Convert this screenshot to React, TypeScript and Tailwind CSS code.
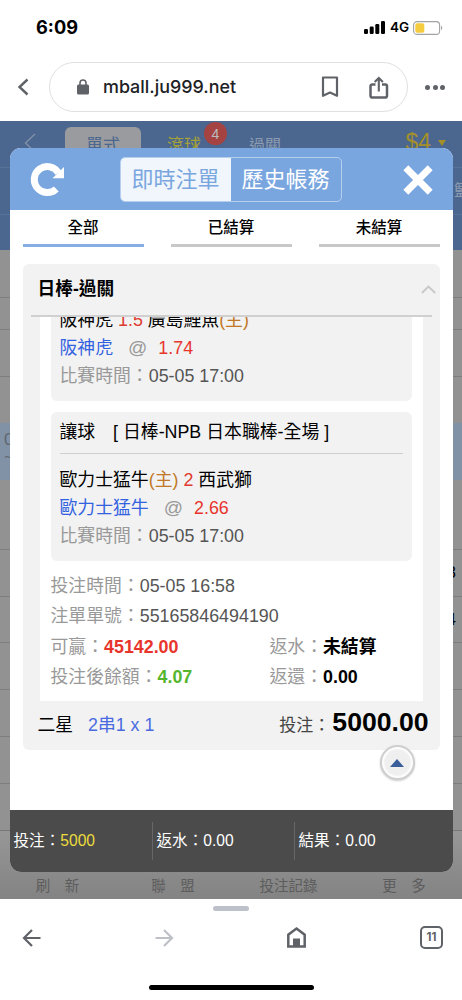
import clsx from "clsx";
import React from "react";

type MatchType = {
  title?: string;
  home: string;
  homeIsHost?: boolean;
  handicap: string;
  away: string;
  awayIsHost?: boolean;
  pick: string;
  odds: string;
  time: string;
};

const matches: MatchType[] = [
  {
    home: "阪神虎",
    handicap: "1.5",
    away: "廣島鯉魚",
    awayIsHost: true,
    pick: "阪神虎",
    odds: "1.74",
    time: "05-05 17:00",
  },
  {
    title: "讓球　[ 日棒-NPB 日本職棒-全場 ]",
    home: "歐力士猛牛",
    homeIsHost: true,
    handicap: "2",
    away: "西武獅",
    pick: "歐力士猛牛",
    odds: "2.66",
    time: "05-05 17:00",
  },
];

const filters = ["全部", "已結算", "未結算"];

const totals = [
  { label: "投注：", value: "5000", highlight: true },
  { label: "返水：", value: "0.00" },
  { label: "結果：", value: "0.00" },
];

function StatusBar() {
  return (
    <div className="flex h-[55px] items-center justify-between pl-9 pr-[19px] font-['Inter',sans-serif] text-black">
      <span className="text-[18.2px] font-bold leading-none">6:09</span>
      <div className="flex items-center">
        <svg width="21" height="13" viewBox="0 0 21 13" fill="#000">
          <rect x="0" y="8" width="4" height="5" rx="1.2" />
          <rect x="5.7" y="5.5" width="4" height="7.5" rx="1.2" />
          <rect x="11.3" y="3" width="4" height="10" rx="1.2" />
          <rect x="17" y="0" width="4" height="13" rx="1.2" />
        </svg>
        <span className="ml-[5px] w-[19px] text-[13.5px] font-semibold leading-none">
          4G
        </span>
        <svg className="ml-1" width="30" height="14" viewBox="0 0 30 14">
          <rect x="0.6" y="0.6" width="26" height="12.8" rx="3.5" fill="none" stroke="#a3a3a3" strokeWidth="1.1" />
          <rect x="2.3" y="2.3" width="9" height="9.4" rx="1.8" fill="#f5cb3f" />
          <path d="M28 4.8c1.6.6 1.6 3.8 0 4.4z" fill="#a3a3a3" />
        </svg>
      </div>
    </div>
  );
}

function AddressBar() {
  return (
    <div className="flex h-[66px] items-start pl-[17px] pr-[17px] pt-[7px]">
      <div className="flex h-[50px] w-8 items-center">
        <svg width="12" height="18" viewBox="0 0 12 18" fill="none" stroke="#5f6368" strokeWidth="2.4">
          <path d="M10.5 1.5 2.5 9l8 7.5" />
        </svg>
      </div>
      <div className="flex h-[50px] w-[359px] items-center rounded-full border border-[#dfe0e2] pl-[27px] pr-[18px]">
        <svg width="12" height="16" viewBox="0 0 12 16">
          <rect x="0" y="5.5" width="12" height="10" rx="1.5" fill="#5f6368" />
          <path d="M3 6V4a3 3 0 0 1 6 0v2" fill="none" stroke="#5f6368" strokeWidth="1.6" />
        </svg>
        <span className="ml-3.5 flex-1 whitespace-nowrap font-['Inter',sans-serif] text-[17.9px] font-medium leading-none text-[#202124]">
          mball.ju999.net
        </span>
        <svg width="18" height="22" viewBox="0 0 18 22" fill="none" stroke="#5f6368" strokeWidth="2.2">
          <path d="M2 1.500h14v18.300l-7-3.200-7 3.200z" strokeLinejoin="round" />
        </svg>
        <svg className="ml-[30px]" width="20" height="23" viewBox="0 0 20 23" fill="none" stroke="#5f6368" strokeWidth="2.500">
          <path d="M6.500 8.500H3.200a1.700 1.700 0 0 0-1.700 1.700v9.600a1.700 1.700 0 0 0 1.700 1.700h13.100a1.700 1.700 0 0 0 1.700-1.700v-9.600a1.700 1.700 0 0 0-1.700-1.700H13" />
          <path d="M9.800 15.500V2.500M5.700 6l4.100-4 4.100 4" strokeWidth="2.100" />
        </svg>
      </div>
      <div className="flex h-[50px] flex-1 items-center justify-end gap-[2.5px]">
        <span className="size-[5px] rounded-full bg-[#5f6368]" />
        <span className="size-[5px] rounded-full bg-[#5f6368]" />
        <span className="size-[5px] rounded-full bg-[#5f6368]" />
      </div>
    </div>
  );
}

// Dimmed page behind the dialog
function PageBackdrop() {
  return (
    <div className="flex h-full flex-col bg-[#929292] text-[17px]">
      <div className="h-[129px] bg-[#4b668f]">
        <div className="flex h-[47px] items-start border-b border-[#587197] pt-1.5">
          <svg className="ml-6 mt-1.5" width="12" height="20" viewBox="0 0 12 20" fill="none" stroke="#8291a8" strokeWidth="1.4">
            <path d="M11 1 1.5 10l9.500 9" />
          </svg>
          <div className="ml-[29px] h-10 w-[76px] rounded-md bg-[#999b9e] pt-0.5 text-center leading-[34px] text-[#4b668f]">
            單式
          </div>
          <div className="relative ml-[26px] w-9 pt-0.5 leading-[34px] text-[#a3a137]">
            滾球
            <span className="absolute -top-[5px] left-[37px] flex size-[23px] items-center justify-center rounded-full bg-[#a54342] text-[14px] leading-none text-[#bbb]">
              4
            </span>
          </div>
          <div className="ml-[46px] pt-0.5 text-[16px] leading-[34px] text-[#8c9bb0]">
            過關
          </div>
          <div className="ml-auto mr-4 flex items-center text-[23px] leading-[31px] text-[#a38f2b]">
            $4
            <span className="ml-[7px] border-x-[4.5px] border-t-[6px] border-x-transparent border-t-[#a38f2b]" />
          </div>
        </div>
        <div className="flex h-[47px] items-center justify-end overflow-hidden border-b border-[#587197]">
          <span className="-mr-2 text-[16px] text-[#8c9bb0]">籃</span>
        </div>
      </div>
      <div className="h-12 border-b border-[#7d7d7d]" />
      <div className="h-8 border-b border-[#7d7d7d]" />
      <div className="h-[47px] border-b border-[#7d7d7d]" />
      <div className="h-[46px]" />
      <div className="h-[57px] bg-[#8192a6] pl-1 pt-2 leading-[18px] text-[#5f6670]">
        0<br />~
      </div>
      <div className="h-[70px] border-b border-[#7d7d7d]" />
      <div className="flex h-[47px] items-center justify-end border-b border-[#7d7d7d] pr-1.5 text-black">
        3
      </div>
      <div className="flex h-[46px] items-center justify-end border-b border-[#7d7d7d] pr-1.5 text-black">
        4
      </div>
      <div className="h-[47px] border-b border-[#7d7d7d]" />
      <div className="h-[47px] border-b border-[#7d7d7d]" />
      <div className="h-[47px] border-b border-[#7d7d7d]" />
      <div className="h-[47px] border-b border-[#777]" />
      <div className="flex flex-1 items-end bg-linear-to-b from-[#979797] to-[#838383] text-[14.5px] leading-[26px] text-[#5d5d5d]">
        <span className="w-[115px] text-center">刷　新</span>
        <span className="w-[116px] text-center">聯　盟</span>
        <span className="w-[115px] text-center">投注記錄</span>
        <span className="w-[116px] text-center">更　多</span>
      </div>
    </div>
  );
}

function DialogHeader() {
  return (
    <div className="flex h-[62px] shrink-0 items-center bg-[#7aa6df]">
      <svg className="ml-5" width="35" height="35" viewBox="0 0 35 35">
        <path d="M26.300 27A13 13 0 1 1 28.500 11" fill="none" stroke="#fff" strokeWidth="7" />
        <path d="M34 5v11.200H22.500z" fill="#fff" />
      </svg>
      <div className="ml-[55px] flex h-[45px] w-[222px] overflow-hidden rounded-[5px] border border-[#b6cfef] text-[22px] leading-[44px]">
        <div className="w-[110px] bg-[#f0f6fb] text-center text-[#7aa6df]">
          即時注單
        </div>
        <div className="flex-1 text-center text-white">歷史帳務</div>
      </div>
      <svg className="ml-[61px] mt-0.5" width="30" height="30" viewBox="0 0 30 30" stroke="#fff" strokeWidth="6.900">
        <path d="m2.800 2.800 24.400 24.400M27.200 2.800 2.800 27.200" />
      </svg>
    </div>
  );
}

function HostTag() {
  return <span className="text-[#c17826]">(主)</span>;
}

function MatchCard({ match }: { match: MatchType }) {
  return (
    <div className="flex h-[149px] flex-col justify-end rounded-md bg-[#f2f2f2] px-[9px] pb-[11px] text-[17.85px] leading-7">
      {match.title && (
        <div className="mb-3 h-[42px] whitespace-nowrap border-b border-[#cfcfcf] text-[17.85px] leading-[41px] text-black">
          {match.title}
        </div>
      )}
      <p className="text-black">
        {match.home}
        {match.homeIsHost && <HostTag />}{" "}
        <span className="text-[#e03a30]">{match.handicap}</span> {match.away}
        {match.awayIsHost && <HostTag />}
      </p>
      <p className="text-[#3262e0]">
        {match.pick}
        <span className="ml-[15px] text-[19px] text-[#999]">@</span>
        <span className="ml-[11px] text-[#e8352c]">{match.odds}</span>
      </p>
      <p className="text-[#555]">
        <span className="text-[#999]">比賽時間：</span>
        {match.time}
      </p>
    </div>
  );
}

function Field({
  label,
  className,
  children,
}: {
  label: string;
  className?: string;
  children: React.ReactNode;
}) {
  return (
    <div className={clsx("whitespace-nowrap", className)}>
      <span className="font-normal text-[#999]">{label}：</span>
      {children}
    </div>
  );
}

function BetSlip() {
  return (
    <div className="ml-[13px] mt-[17px] flex h-[486px] w-[417px] flex-col rounded-md bg-[#f2f2f2]">
      <div className="mx-2 flex h-[53px] shrink-0 items-center justify-between border-b-2 border-[#d0d0d0] pl-[7px]">
        <span className="text-[17.7px] font-bold text-black">日棒-過關</span>
        <svg className="-mr-1" width="15" height="9" viewBox="0 0 15 9" fill="none" stroke="#c8c8c8" strokeWidth="1.8">
          <path d="m.8 8 6.700-6.500L14.200 8" />
        </svg>
      </div>
      {/* scrolled to the end of the list */}
      <div className="mx-[17px] flex h-96 flex-col justify-end overflow-hidden bg-white px-[11px] pb-[9px]">
        <div className="flex flex-col gap-[11px]">
          {matches.map((match, index) => (
            <MatchCard key={index} match={match} />
          ))}
        </div>
        <div className="mt-2.5 grid grid-cols-[219px_1fr] text-[17.85px] leading-[30.2px] text-[#555]">
          <Field label="投注時間" className="col-span-2">
            05-05 16:58
          </Field>
          <Field label="注單單號" className="col-span-2">
            55165846494190
          </Field>
          <Field label="可贏" className="font-bold text-[#e8352c]">
            45142.00
          </Field>
          <Field label="返水" className="font-bold text-black">
            未結算
          </Field>
          <Field label="投注後餘額" className="font-bold text-[#55b52e]">
            4.07
          </Field>
          <Field label="返還" className="font-bold text-black">
            0.00
          </Field>
        </div>
      </div>
      <div className="flex h-[49px] items-center pl-[15px] pr-[11px] text-[17.8px]">
        <span className="text-black">二星</span>
        <span className="ml-[15px] text-[#4a6be0]">2串1 x 1</span>
        <span className="ml-auto text-[17px] text-[#444]">投注：</span>
        <span className="-mt-2 ml-0.5 text-[26.6px] font-bold leading-[40px] text-black">
          5000.00
        </span>
      </div>
    </div>
  );
}

function BetDialog() {
  return (
    <div className="absolute left-[9.5px] top-[27px] flex h-[724px] w-[443px] flex-col overflow-hidden rounded-[11px] bg-white">
      <DialogHeader />
      <div className="mx-[13px] flex h-[37px] shrink-0 justify-between">
        {filters.map((name, index) => (
          <div
            key={name}
            className={clsx(
              "w-[121px] border-b-[3px] text-center text-[15.5px] font-medium leading-[36px] text-black",
              index === 0 ? "border-[#86aee3]" : "border-[#c8c8c8]"
            )}
          >
            {name}
          </div>
        ))}
      </div>
      <BetSlip />
      <div className="mt-auto flex h-[62px] items-center bg-[#4b4b4b] text-[15.6px] text-white">
        {totals.map((total, index) => (
          <div
            key={total.label}
            className={clsx(
              "flex h-[38px] w-[142px] items-center pl-1",
              index > 0 && "border-l border-[#666]"
            )}
          >
            {total.label}
            <span className={total.highlight ? "text-[#ecdc3c]" : "text-white"}>
              {total.value}
            </span>
          </div>
        ))}
      </div>
      <div className="absolute left-[370px] top-[597px] flex size-[35px] items-center justify-center rounded-full border-2 border-[#cfcfcf] bg-[#efefef] shadow-[0_1px_2px_#0003,inset_0_0_2px_2px_#fff]">
        <span className="border-x-[7px] border-b-[8px] border-x-transparent border-b-[#3a5e9c]" />
      </div>
    </div>
  );
}

function BrowserToolbar() {
  return (
    <div className="h-[101px] bg-white">
      <div className="flex h-[19px] justify-center pt-[7px]">
        <span className="h-[5px] w-9 rounded-full bg-[#bdc1c9]" />
      </div>
      <div className="flex h-[39px] items-center justify-between pl-[22px] pr-[19px]">
        <svg width="19" height="18" viewBox="0 0 19 18" fill="none" stroke="#5f6368" strokeWidth="2.2">
          <path d="M18.500 9H2M10 1 2 9l8 8" />
        </svg>
        <svg width="19" height="18" viewBox="0 0 19 18" fill="none" stroke="#bdc1c6" strokeWidth="2.2">
          <path d="M.5 9H17M9 1l8 8-8 8" />
        </svg>
        <svg width="19" height="21" viewBox="0 0 19 21">
          <path d="M1.300 19.500V7.700L9.500 1.600l8.200 6.100v11.800z" fill="none" stroke="#5f6368" strokeWidth="2.500" />
          <path d="M6 11.500h7v8.500H6z" fill="#5f6368" />
        </svg>
        <span className="flex size-[23px] items-center justify-center rounded-[5px] border-2 border-[#5f6368] font-['Inter',sans-serif] text-[11.5px] font-bold leading-none text-[#5f6368]">
          11
        </span>
      </div>
      <div className="flex justify-center pt-[28px]">
        <span className="h-[5px] w-[165px] rounded-full bg-black" />
      </div>
    </div>
  );
}

export default function App() {
  return (
    <div className="h-[1000px] w-[462px] overflow-hidden bg-white font-['Liberation_Sans','Noto_Sans_CJK_TC',sans-serif]">
      <StatusBar />
      <AddressBar />
      <main className="relative h-[778px] overflow-hidden">
        <PageBackdrop />
        <BetDialog />
      </main>
      <BrowserToolbar />
    </div>
  );
}
